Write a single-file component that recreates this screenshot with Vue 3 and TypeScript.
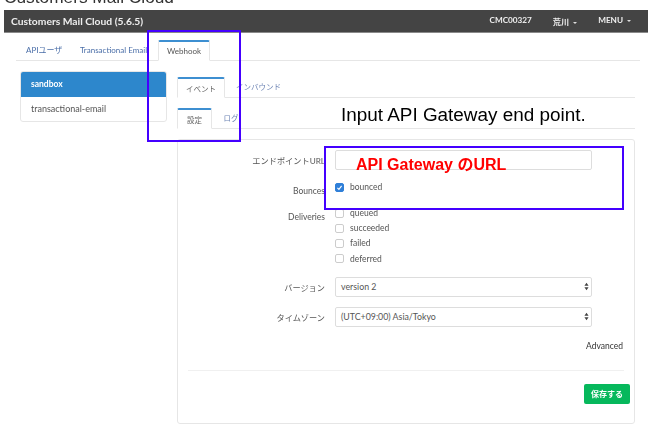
<script setup lang="ts">
const mainTabs = [
  { label: "APIユーザ", active: false },
  { label: "Transactional Email", active: false },
  { label: "Webhook", active: true },
];
const deliveries = ["queued", "succeeded", "failed", "deferred"];
const selects = [
  { label: "バージョン", value: "version 2" },
  { label: "タイムゾーン", value: "(UTC+09:00) Asia/Tokyo" },
];
</script>

<template>
  <div class="page">
    <div class="blurred">
      <div class="doc-title"><span>Customers Mail Cloud</span></div>
      <header class="navbar">
        <span class="brand">Customers Mail Cloud (5.6.5)</span>
        <nav class="nav-right">
          <span>CMC00327</span>
          <span>荒川 <i class="caret"></i></span>
          <span>MENU <i class="caret"></i></span>
        </nav>
      </header>

      <div class="main-tabs">
        <a v-for="t in mainTabs" :key="t.label" class="tab" :class="{ active: t.active }">{{ t.label }}</a>
      </div>

      <div class="columns">
        <aside class="side-list">
          <div class="side-item selected">sandbox</div>
          <div class="side-item">transactional-email</div>
        </aside>

        <section class="content">
          <div class="sub-tabs first">
            <a class="tab active">イベント</a>
            <a class="tab">インバウンド</a>
          </div>
          <div class="sub-tabs second">
            <a class="tab active">設定</a>
            <a class="tab">ログ</a>
          </div>

          <div class="panel">
            <div class="row url-row">
              <label class="ja">エンドポイントURL</label>
              <input class="text-input" type="text" />
            </div>
            <div class="row bounce-row">
              <label>Bounces</label>
              <div class="check on">
                <span class="box">
                  <svg viewBox="0 0 10 10" width="7" height="7">
                    <path d="M2 5.4 4.2 7.6 8 2.6" fill="none" stroke="#fff" stroke-width="1.6" />
                  </svg>
                </span>
                bounced
              </div>
            </div>
            <div class="row deliveries-row">
              <label>Deliveries</label>
              <div class="check-list">
                <div v-for="d in deliveries" :key="d" class="check"><span class="box"></span>{{ d }}</div>
              </div>
            </div>
            <div v-for="s in selects" :key="s.label" class="row select-row">
              <label class="ja">{{ s.label }}</label>
              <div class="select">
                {{ s.value }}
                <svg class="updown" viewBox="0 0 6 10" width="5" height="9">
                  <path d="M3 0.5 5.5 4H0.5ZM3 9.5 0.5 6H5.5Z" fill="#444" />
                </svg>
              </div>
            </div>
            <div class="advanced">Advanced</div>
            <hr class="divider" />
            <div class="actions"><button type="button" class="save">保存する</button></div>
          </div>
        </section>
      </div>
    </div>

    <!-- annotations drawn on top of the screenshot -->
    <div class="mark mark-tab"></div>
    <div class="mark mark-url"></div>
    <div class="note">Input API Gateway end point.</div>
    <div class="red-note">API Gateway のURL</div>
  </div>
</template>

<style>
html,
body {
  margin: 0;
  background: #fff;
}
</style>

<style scoped>
.page {
  position: relative;
  width: 654px;
  height: 443px;
  overflow: hidden;
  background: #fff;
  font-family: "Lato", "Noto Sans CJK JP", sans-serif;
  color: #555;
  font-size: 8.5px;
}
.blurred {
  filter: blur(0.45px);
}
.doc-title {
  height: 10px;
  overflow: hidden;
  display: flex;
  align-items: flex-end;
  padding-left: 4px;
  font-family: "Liberation Sans", sans-serif;
  font-size: 17.3px;
  color: #333;
}
.doc-title span {
  line-height: 10px;
  position: relative;
  top: -8px;
  white-space: nowrap;
}
.navbar {
  height: 23px;
  margin: 0 6px 0 4px;
  padding: 0 17px 0 7px;
  background: #444;
  border-bottom: 1px solid #8a8a8a;
  box-sizing: border-box;
  display: flex;
  align-items: center;
  justify-content: space-between;
  color: #eee;
}
.brand {
  font-size: 10.3px;
  font-weight: 700;
}
.nav-right {
  display: flex;
  gap: 21px;
  font-weight: 700;
  font-size: 8.2px;
}
.caret {
  display: inline-block;
  margin-left: 2px;
  vertical-align: middle;
  border-top: 2.5px solid #ddd;
  border-left: 2.5px solid transparent;
  border-right: 2.5px solid transparent;
}
.main-tabs {
  height: 20px;
  margin: 7px 14px 0 16px;
  display: flex;
  align-items: flex-start;
  border-bottom: 1px solid #e6e6e6;
}
.tab {
  box-sizing: border-box;
  height: 21px;
  padding: 0 10px;
  display: flex;
  align-items: center;
  color: #4a6ea8;
  font-size: 8px;
  white-space: nowrap;
}
.main-tabs .tab {
  width: 54px;
  padding: 0 0 2px 10px;
}
.main-tabs .tab:nth-child(2) {
  width: 89px;
}
.tab.active {
  background: #fff;
  border: 1px solid #e6e6e6;
  border-top: 2px solid #3d8fd1;
  border-bottom-color: #fff;
  border-radius: 2px 2px 0 0;
  color: #555;
}
.main-tabs .tab.active {
  width: 52px;
  margin-left: -1px;
  justify-content: center;
  padding: 0;
}
.columns {
  display: flex;
  align-items: flex-start;
  margin: 10px 19px 0 20px;
  gap: 10px;
}
.side-list {
  width: 147px;
  border: 1px solid #e6e6e6;
  border-radius: 3px;
  box-sizing: border-box;
  overflow: hidden;
  flex: none;
}
.side-item {
  height: 24px;
  line-height: 24px;
  padding-left: 10px;
  font-size: 9px;
}
.side-item.selected {
  height: 25px;
  line-height: 25px;
  background: #2d87cc;
  color: #fff;
  font-size: 8.5px;
  font-weight: 700;
}
.content {
  flex: 1;
  margin-top: 6px;
}
.sub-tabs {
  display: flex;
  height: 20px;
  border-bottom: 1px solid #e6e6e6;
}
.sub-tabs .tab {
  width: 48px;
  padding: 0 0 2px;
  justify-content: center;
  color: #6f86b5;
  font-size: 7.5px;
}
.sub-tabs.first .tab:nth-child(2) {
  width: 67px;
}
.sub-tabs.second {
  margin-top: 10px;
}
.sub-tabs.second .tab.active {
  width: 35px;
}
.sub-tabs.second .tab:nth-child(2) {
  width: 38px;
}
.sub-tabs .tab.active {
  color: #666;
  padding-bottom: 0;
}
.panel {
  box-sizing: border-box;
  height: 285px;
  margin-top: 10px;
  padding: 10px 10px 0;
  border: 1px solid #e6e6e6;
  border-radius: 3px;
}
.row {
  display: flex;
  gap: 10px;
}
.row label {
  width: 137px;
  flex: none;
  text-align: right;
  font-size: 8.5px;
  white-space: nowrap;
}
.row label.ja {
  font-size: 8.2px;
}
.url-row {
  align-items: center;
}
.text-input {
  box-sizing: border-box;
  width: 257px;
  height: 20px;
  padding: 0;
  border: 1px solid #ddd;
  border-radius: 2px;
  background: #fff;
}
.bounce-row {
  margin-top: 11px;
  height: 26px;
}
.bounce-row label {
  padding-top: 5px;
}
.deliveries-row label {
  padding-top: 5px;
}
.check-list {
  display: flex;
  flex-direction: column;
  gap: 3.2px;
}
.check {
  display: flex;
  align-items: center;
  gap: 6px;
  height: 12px;
}
.box {
  box-sizing: border-box;
  width: 9px;
  height: 9px;
  border: 1px solid #ccc;
  border-radius: 2px;
  background: #fff;
  display: flex;
  align-items: center;
  justify-content: center;
}
.on .box {
  border-color: #2f7fd8;
  background: #2f7fd8;
}
.select-row {
  align-items: center;
  margin-top: 10px;
}
.deliveries-row + .select-row {
  margin-top: 12px;
}
.select {
  box-sizing: border-box;
  position: relative;
  width: 257px;
  height: 20px;
  line-height: 18px;
  padding-left: 5px;
  border: 1px solid #ddd;
  border-radius: 2px;
  background: #fff;
  font-size: 8.8px;
}
.updown {
  position: absolute;
  right: 2px;
  top: 4px;
}
.advanced {
  margin-top: 14px;
  padding-right: 1px;
  text-align: right;
  font-size: 8.5px;
  color: #333;
}
.divider {
  margin: 19px 0 0;
  border: 0;
  border-top: 1px solid #f0f0f0;
}
.actions {
  display: flex;
  justify-content: flex-end;
  margin: 13px -6px 0 0;
}
.save {
  width: 46px;
  height: 20px;
  padding: 0;
  border: 0;
  border-radius: 2px;
  background: #06b85c;
  color: #fff;
  font-family: inherit;
  font-size: 8px;
  font-weight: 700;
}
.mark {
  position: absolute;
  box-sizing: border-box;
  border: 2px solid #4400ff;
}
.mark-tab {
  left: 147px;
  top: 30px;
  width: 94px;
  height: 112px;
}
.mark-url {
  left: 324px;
  top: 146px;
  width: 300px;
  height: 64px;
}
.note {
  position: absolute;
  left: 341px;
  top: 104px;
  font-family: "Liberation Sans", sans-serif;
  font-size: 18.9px;
  line-height: 22px;
  color: #000;
  white-space: nowrap;
}
.red-note {
  position: absolute;
  left: 356px;
  top: 155px;
  font-family: "Liberation Sans", "Noto Sans CJK JP", sans-serif;
  font-size: 16px;
  line-height: 20px;
  font-weight: 700;
  color: #f00;
  white-space: nowrap;
}
</style>
